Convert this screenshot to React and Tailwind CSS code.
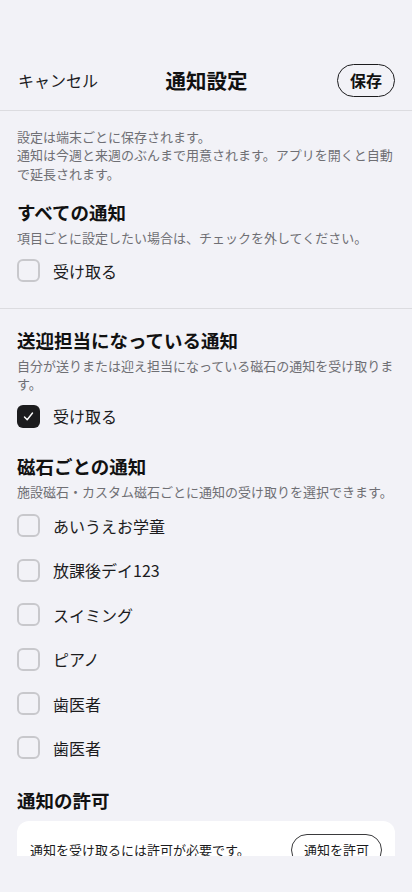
import React from "react";

const FONT = { fontFamily: '"Noto Sans CJK JP", "Noto Sans", sans-serif' };

const magnets = ["あいうえお学童", "放課後デイ123", "スイミング", "ピアノ", "歯医者", "歯医者"];

const Checkbox = ({ checked, label }) => (
  <div className="flex items-center gap-[13px] h-[44.4px]">
    {checked ? (
      <span className="w-[23px] h-[23px] rounded-[6px] bg-[#1c1c1e] flex items-center justify-center flex-shrink-0">
        <svg width="13" height="13" viewBox="0 0 13 13" fill="none">
          <path d="M2.5 7 L5.2 9.8 L10.5 3" stroke="white" strokeWidth="1.4" strokeLinecap="round" strokeLinejoin="round" />
        </svg>
      </span>
    ) : (
      <span className="w-[23px] h-[23px] rounded-[6px] border-2 border-[#c8c8cc] bg-[#f2f2f7] flex-shrink-0" />
    )}
    <span className="text-[16px] text-[#1c1c1e]">{label}</span>
  </div>
);

const Heading = ({ children }) => (
  <h2 className="text-[18.5px] font-bold leading-[26px] text-[#111]">{children}</h2>
);

const Desc = ({ children }) => (
  <p className="text-[13px] leading-[18.5px] text-[#6f6f74] mt-[4px]">{children}</p>
);

export default function App() {
  return (
    <div className="h-[892px] bg-[#f2f2f7] flex flex-col overflow-hidden" style={FONT}>
      {/* Header */}
      <div className="pt-[50px] border-b border-[#dcdce0]">
        <div className="grid grid-cols-[1fr_auto_1fr] items-center h-[60px] pl-[18px] pr-[17px]">
          <span className="text-[16px] text-[#1c1c1e]">キャンセル</span>
          <span className="text-[20.5px] font-bold text-[#111]">通知設定</span>
          <div className="flex justify-end">
            <button className="h-[33px] px-[12px] rounded-full border-[1.5px] border-[#1c1c1e] text-[16px] font-bold text-[#111] leading-none">
              保存
            </button>
          </div>
        </div>
      </div>

      {/* Scroll area */}
      <div className="flex-1 overflow-hidden">
        <div className="px-[17px] pt-[16.5px] pb-[15px]">
          <p className="text-[13px] leading-[18.5px] text-[#6f6f74]">
            設定は端末ごとに保存されます。
            <br />
            通知は今週と来週のぶんまで用意されます。アプリを開くと自動で延長されます。
          </p>
          <div className="mt-[16px]">
            <Heading>すべての通知</Heading>
            <Desc>項目ごとに設定したい場合は、チェックを外してください。</Desc>
            <div className="mt-[1px]">
              <Checkbox label="受け取る" />
            </div>
          </div>
        </div>

        <div className="border-t border-[#dcdce0]" />

        <div className="px-[17px] pt-[18px]">
          <Heading>送迎担当になっている通知</Heading>
          <Desc>自分が送りまたは迎え担当になっている磁石の通知を受け取ります。</Desc>
          <Checkbox checked label="受け取る" />

          <div className="mt-[15px]">
            <Heading>磁石ごとの通知</Heading>
            <Desc>施設磁石・カスタム磁石ごとに通知の受け取りを選択できます。</Desc>
            <div className="mt-[2px] flex flex-col">
              {magnets.map((m, i) => (
                <Checkbox key={i} label={m} />
              ))}
            </div>
          </div>

          <div className="mt-[16.5px]">
            <Heading>通知の許可</Heading>
            <div className="mt-[8px] bg-white rounded-[12px] px-[13px] py-[13px] flex items-center justify-between">
              <span className="text-[13px] text-[#1c1c1e]">通知を受け取るには許可が必要です。</span>
              <button className="h-[32px] px-[12px] rounded-full border-[1.5px] border-[#3a3a3c] text-[13px] text-[#1c1c1e]">
                通知を許可
              </button>
            </div>
          </div>
        </div>
      </div>

      <div className="h-[36px] flex-shrink-0" />
    </div>
  );
}
